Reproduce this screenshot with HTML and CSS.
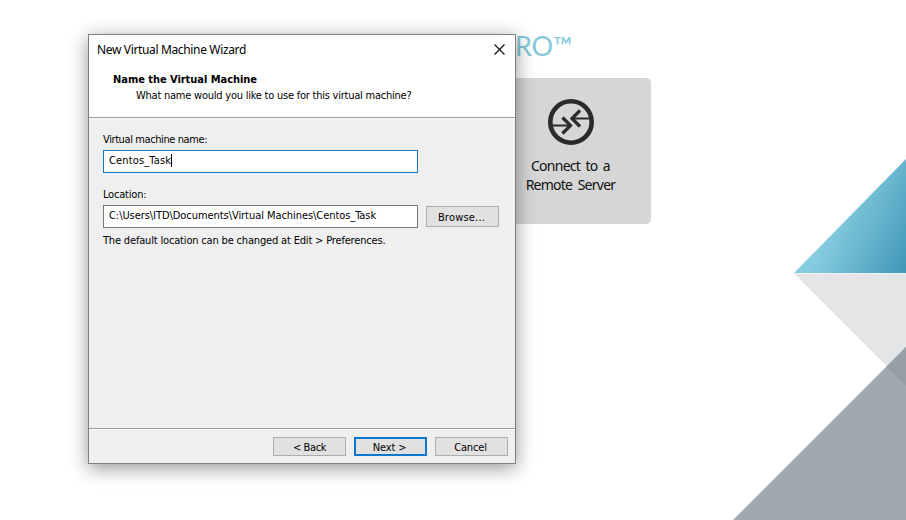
FILE: index.html
```
<!DOCTYPE html>
<html lang="en">
<head>
<meta charset="utf-8">
<title>New Virtual Machine Wizard</title>
<link rel="stylesheet" href="styles.css">
</head>
<body>
<div class="desktop">
  <svg class="backdrop" width="906" height="520" viewBox="0 0 906 520" aria-hidden="true">
    <defs>
      <linearGradient id="blue" gradientUnits="userSpaceOnUse" x1="825" y1="235" x2="912" y2="276">
        <stop offset="0" stop-color="#86cce0"/>
        <stop offset="1" stop-color="#3b93b3"/>
      </linearGradient>
    </defs>
    <path d="M794 273.500L906 385.500V273.500Z" fill="#e4e5e7"/>
    <path d="M794 273L906 159V273Z" fill="url(#blue)"/>
    <path d="M733 520L906 347V520Z" fill="#9faab0"/>
    <path d="M886.500 366.500L906 347V386Z" fill="#95a0a6"/>
  </svg>
  <div class="brand">PRO<span class="tm">™</span></div>
  <div class="tile">
    <svg class="tile-icon" width="46" height="46" viewBox="0 0 46 46" fill="none" stroke="#2a2a2a">
      <circle cx="23" cy="23" r="20.700" stroke-width="4.600"/>
      <path d="M4 26.500H21M25 19.500H42" stroke-width="2"/>
      <path d="M14.500 18.500L22.500 26.500L14.500 34.500M32 11.500L24 19.500L32 27.500" stroke-width="3.200"/>
    </svg>
    <div>Connect to a</div>
    <div>Remote Server</div>
  </div>

  <div class="dialog">
    <div class="header">
      <div class="titlebar">
        <span class="title">New Virtual Machine Wizard</span>
        <svg class="close" width="11" height="11" viewBox="0 0 11 11"><path d="M.5 .5L10.500 10.500M10.500 .5L.5 10.500" stroke="#111" stroke-width="1.200"/></svg>
      </div>
      <div class="heading">Name the Virtual Machine</div>
      <div class="subheading">What name would you like to use for this virtual machine?</div>
    </div>
    <div class="content">
      <div class="label name-label">Virtual machine name:</div>
      <div class="field focused"><span class="name-value">Centos_Task</span><i class="caret"></i></div>
      <div class="label second">Location:</div>
      <div class="row">
        <div class="field"><span class="path">C:\Users\ITD\Documents\Virtual Machines\Centos_Task</span></div>
        <div class="button browse">Browse...</div>
      </div>
      <div class="label hint">The default location can be changed at Edit &gt; Preferences.</div>
    </div>
    <div class="footer">
      <div class="button back">&lt; Back</div>
      <div class="button primary">Next &gt;</div>
      <div class="button">Cancel</div>
    </div>
  </div>
</div>
</body>
</html>
```
FILE: styles.css
```
* { box-sizing: border-box; }
body { margin: 0; }
.desktop {
  position: relative;
  width: 906px;
  height: 520px;
  overflow: hidden;
  background: #fff;
}
.backdrop { display: block; }
.brand {
  position: absolute;
  right: 334px;
  top: 30px;
  display: flex;
  font: 400 27px/32px "Lato", sans-serif;
  color: #84c8dc;
}
.tm { font-size: 25px; line-height: 30px; }
.tile {
  position: absolute;
  left: 490px;
  top: 78px;
  width: 161px;
  height: 146px;
  padding-top: 21px;
  border-radius: 5px;
  background: #d6d6d6;
  font: 14px/19px "Noto Sans", sans-serif;
  letter-spacing: -.75px;
  word-spacing: 2.5px;
  color: #111;
  text-align: center;
}
.tile-icon { display: block; margin: 0 auto 11px; }
.dialog {
  position: absolute;
  left: 88px;
  top: 34px;
  width: 428px;
  height: 430px;
  display: flex;
  flex-direction: column;
  border: 1px solid #7f8077;
  background: #efefef;
  box-shadow: 0 4px 18px rgba(0, 0, 0, .42);
  font: 11px/14px "DejaVu Sans Condensed", "DejaVu Sans", sans-serif;
  color: #000;
  white-space: nowrap;
}
.header {
  height: 83px;
  border-bottom: 1px solid #999;
  background: #fff;
}
.titlebar {
  display: flex;
  justify-content: space-between;
  height: 38px;
  padding: 6px 10px 0 8px;
  font: 12px/17px "Noto Sans", sans-serif;
}
.title { letter-spacing: -.35px; }
.close { margin-top: 3px; }
.heading { padding-left: 24px; font-weight: bold; letter-spacing: -.04px; }
.subheading { padding: 2px 0 0 47px; letter-spacing: -.23px; }
.content {
  flex: 1;
  padding: 14px 15px 0 14px;
  border-top: 1px solid #fff;
}
.label { height: 17px; }
.name-label { letter-spacing: -.4px; }
.field {
  display: flex;
  width: 315px;
  height: 23px;
  padding: 2px 5px;
  border: 1px solid #777;
  background: #fff;
}
.field.focused { border-color: #1a76bb; }
.name-value { letter-spacing: .15px; }
.path { letter-spacing: -.06px; }
.caret { width: 1px; height: 13px; margin-top: 1px; background: #000; }
.focused, .path { line-height: 15px; }
.label.second { margin-top: 15px; letter-spacing: -.2px; }
.row { display: flex; align-items: center; gap: 8px; }
.label.hint { margin-top: 6px; letter-spacing: -.17px; }
.button {
  display: flex;
  justify-content: center;
  width: 73px;
  height: 19px;
  padding-right: 2px;
  border: 1px solid #adadad;
  background: #e1e1e1;
  line-height: 20px;
  letter-spacing: -.15px;
}
.button.back { padding-right: 0; letter-spacing: -.4px; }
.button.browse { height: 21px; line-height: 22px; letter-spacing: .2px; }
.button.primary { border: 2px solid #0b78d0; line-height: 18px; }
.footer {
  display: flex;
  justify-content: flex-end;
  gap: 8px;
  height: 35px;
  padding: 8px 7px 0;
  border-top: 1px solid #999;
  box-shadow: inset 0 1px #fff;
}
```
